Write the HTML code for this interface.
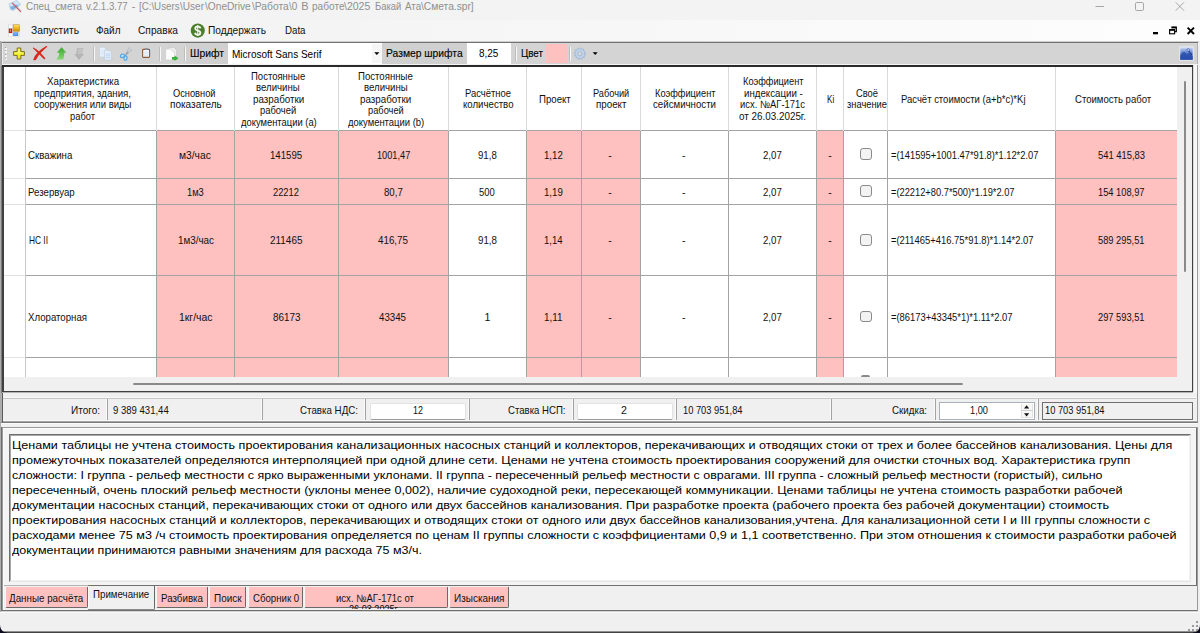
<!DOCTYPE html>
<html><head><meta charset="utf-8"><title>Спец_смета</title>
<style>
html,body{margin:0;padding:0;}
body{width:1200px;height:633px;overflow:hidden;position:relative;background:#f0f0f0;font-family:"Liberation Sans", sans-serif;}
body>div,body>span,body>svg{position:absolute;}
.t{white-space:pre;transform-origin:0 50%;}
</style></head><body>
<div style="left:0px;top:0px;width:1200px;height:20px;background:#f3f3f3;"></div>
<div style="left:0px;top:20px;width:1200px;height:21px;background:linear-gradient(90deg,#f1f1f1,#fdfdfd);"></div>
<div style="left:0px;top:41px;width:1199px;height:1px;background:#cfcfcf;"></div>
<div style="left:1px;top:42px;width:1197px;height:1px;background:#727272;"></div>
<div style="left:2px;top:43px;width:1196px;height:21px;background:#d4d4d4;"></div>
<div style="left:1px;top:42px;width:1px;height:24px;background:#a0a0a0;"></div>
<div style="left:2px;top:43px;width:1px;height:21px;background:#ececec;"></div>
<div style="left:1197px;top:43px;width:1px;height:22px;background:#b0b0b0;"></div>
<div style="left:2px;top:64px;width:1196px;height:1px;background:#f4f4f4;"></div>
<div style="left:228px;top:43px;width:154px;height:21px;background:#ffffff;"></div>
<div style="left:372px;top:44px;width:10px;height:19px;background:#f6f6f6;"></div>
<div style="left:467px;top:43px;width:44px;height:21px;background:#ffffff;"></div>
<div style="left:546px;top:44px;width:21px;height:19px;background:#ffc0c0;"></div>
<div style="left:186px;top:43px;width:42px;height:21px;background:#d0d0d0;"></div>
<div style="left:382px;top:43px;width:85px;height:21px;background:#d0d0d0;"></div>
<div style="left:94px;top:47px;width:1px;height:14px;background:#f8f8f8;"></div>
<div style="left:93px;top:47px;width:1px;height:14px;background:#bdbdbd;"></div>
<div style="left:160px;top:47px;width:1px;height:14px;background:#f8f8f8;"></div>
<div style="left:159px;top:47px;width:1px;height:14px;background:#bdbdbd;"></div>
<div style="left:185px;top:47px;width:1px;height:14px;background:#f8f8f8;"></div>
<div style="left:184px;top:47px;width:1px;height:14px;background:#bdbdbd;"></div>
<div style="left:516px;top:47px;width:1px;height:14px;background:#f8f8f8;"></div>
<div style="left:515px;top:47px;width:1px;height:14px;background:#bdbdbd;"></div>
<div style="left:570px;top:47px;width:1px;height:14px;background:#f8f8f8;"></div>
<div style="left:569px;top:47px;width:1px;height:14px;background:#bdbdbd;"></div>
<div style="left:2px;top:65px;width:1192px;height:327px;background:#404040;"></div>
<div style="left:2px;top:392px;width:1192px;height:1px;background:#b4b4b4;"></div>
<div style="left:2px;top:65px;width:1191px;height:2px;background:#2a2a2a;"></div>
<div style="left:1px;top:66px;width:1px;height:327px;background:#7a7a7a;"></div>
<div style="left:4px;top:67px;width:1188px;height:324px;background:#ffffff;"></div>
<div style="left:1193px;top:65px;width:4px;height:328px;background:#f7f7f7;"></div>
<div style="left:1193px;top:65px;width:1px;height:327px;background:#d8d8d8;"></div>
<div style="left:1197px;top:65px;width:1px;height:328px;background:#9c9c9c;"></div>
<div style="left:4px;top:377px;width:1188px;height:14px;background:#f0f0f0;"></div>
<div style="left:1177px;top:67px;width:15px;height:324px;background:#f0f0f0;"></div>
<div style="left:1184px;top:81px;width:2px;height:191px;background:#8a8a8a;border-radius:1px;"></div>
<div style="left:133px;top:383px;width:830px;height:2px;background:#8a8a8a;border-radius:1px;"></div>
<div style="left:157px;top:131px;width:77px;height:246px;background:#ffc0c0;"></div>
<div style="left:235px;top:131px;width:103px;height:246px;background:#ffc0c0;"></div>
<div style="left:339px;top:131px;width:109px;height:246px;background:#ffc0c0;"></div>
<div style="left:527px;top:131px;width:54px;height:246px;background:#ffc0c0;"></div>
<div style="left:582px;top:131px;width:58px;height:246px;background:#ffc0c0;"></div>
<div style="left:817px;top:131px;width:26px;height:246px;background:#ffc0c0;"></div>
<div style="left:1056px;top:131px;width:121px;height:246px;background:#ffc0c0;"></div>
<div style="left:4px;top:130px;width:21px;height:1px;background:#e2e2e2;"></div>
<div style="left:25px;top:130px;width:1152px;height:1px;background:#a3a3a3;"></div>
<div style="left:4px;top:178px;width:21px;height:1px;background:#e2e2e2;"></div>
<div style="left:25px;top:178px;width:1152px;height:1px;background:#a3a3a3;"></div>
<div style="left:4px;top:204px;width:21px;height:1px;background:#e2e2e2;"></div>
<div style="left:25px;top:204px;width:1152px;height:1px;background:#a3a3a3;"></div>
<div style="left:4px;top:275px;width:21px;height:1px;background:#e2e2e2;"></div>
<div style="left:25px;top:275px;width:1152px;height:1px;background:#a3a3a3;"></div>
<div style="left:4px;top:357px;width:21px;height:1px;background:#e2e2e2;"></div>
<div style="left:25px;top:357px;width:1152px;height:1px;background:#a3a3a3;"></div>
<div style="left:25px;top:67px;width:1px;height:64px;background:#dadada;"></div>
<div style="left:25px;top:131px;width:1px;height:246px;background:#a3a3a3;"></div>
<div style="left:156px;top:67px;width:1px;height:64px;background:#dadada;"></div>
<div style="left:156px;top:131px;width:1px;height:246px;background:#a3a3a3;"></div>
<div style="left:234px;top:67px;width:1px;height:64px;background:#dadada;"></div>
<div style="left:234px;top:131px;width:1px;height:246px;background:#a3a3a3;"></div>
<div style="left:338px;top:67px;width:1px;height:64px;background:#dadada;"></div>
<div style="left:338px;top:131px;width:1px;height:246px;background:#a3a3a3;"></div>
<div style="left:448px;top:67px;width:1px;height:64px;background:#dadada;"></div>
<div style="left:448px;top:131px;width:1px;height:246px;background:#a3a3a3;"></div>
<div style="left:526px;top:67px;width:1px;height:64px;background:#dadada;"></div>
<div style="left:526px;top:131px;width:1px;height:246px;background:#a3a3a3;"></div>
<div style="left:581px;top:67px;width:1px;height:64px;background:#dadada;"></div>
<div style="left:581px;top:131px;width:1px;height:246px;background:#a3a3a3;"></div>
<div style="left:640px;top:67px;width:1px;height:64px;background:#dadada;"></div>
<div style="left:640px;top:131px;width:1px;height:246px;background:#a3a3a3;"></div>
<div style="left:728px;top:67px;width:1px;height:64px;background:#dadada;"></div>
<div style="left:728px;top:131px;width:1px;height:246px;background:#a3a3a3;"></div>
<div style="left:816px;top:67px;width:1px;height:64px;background:#dadada;"></div>
<div style="left:816px;top:131px;width:1px;height:246px;background:#a3a3a3;"></div>
<div style="left:843px;top:67px;width:1px;height:64px;background:#dadada;"></div>
<div style="left:843px;top:131px;width:1px;height:246px;background:#a3a3a3;"></div>
<div style="left:887px;top:67px;width:1px;height:64px;background:#dadada;"></div>
<div style="left:887px;top:131px;width:1px;height:246px;background:#a3a3a3;"></div>
<div style="left:1055px;top:67px;width:1px;height:64px;background:#dadada;"></div>
<div style="left:1055px;top:131px;width:1px;height:246px;background:#a3a3a3;"></div>
<div style="left:25px;top:67px;width:1px;height:310px;background:#c8c8c8;"></div>
<div style="left:860px;top:148px;width:9.7px;height:9.8px;background:#f3f3f3;border:1px solid #8a8a8a;border-radius:3px;"></div>
<div style="left:860px;top:185px;width:9.7px;height:9.8px;background:#f3f3f3;border:1px solid #8a8a8a;border-radius:3px;"></div>
<div style="left:860px;top:234px;width:9.7px;height:9.8px;background:#f3f3f3;border:1px solid #8a8a8a;border-radius:3px;"></div>
<div style="left:860px;top:310.5px;width:9.7px;height:9.8px;background:#f3f3f3;border:1px solid #8a8a8a;border-radius:3px;"></div>
<div style="left:861px;top:375.3px;width:9px;height:1.7px;background:#8a8a8a;border-radius:2px 2px 0 0;"></div>
<div style="left:3px;top:397px;width:1193px;height:1px;background:#f8f8f8;"></div>
<div style="left:3px;top:398px;width:1193px;height:1px;background:#c6c6c6;"></div>
<div style="left:0px;top:421px;width:1198px;height:1px;background:#a4a4a4;"></div>
<div style="left:0px;top:422px;width:1198px;height:1px;background:#7c7c7c;"></div>
<div style="left:0px;top:423px;width:1198px;height:1px;background:#fafafa;"></div>
<div style="left:2px;top:393px;width:1px;height:29px;background:#5a5a5a;"></div>
<div style="left:1px;top:393px;width:1px;height:29px;background:#b0b0b0;"></div>
<div style="left:1197px;top:393px;width:1px;height:29px;background:#9a9a9a;"></div>
<div style="left:105.8px;top:399px;width:1.2px;height:22px;background:#fbfbfb;"></div>
<div style="left:107px;top:399px;width:1px;height:22px;background:#a2a2a2;"></div>
<div style="left:260.8px;top:399px;width:1.2px;height:22px;background:#fbfbfb;"></div>
<div style="left:262px;top:399px;width:1px;height:22px;background:#a2a2a2;"></div>
<div style="left:364.2px;top:399px;width:1.2px;height:22px;background:#fbfbfb;"></div>
<div style="left:365.4px;top:399px;width:1px;height:22px;background:#a2a2a2;"></div>
<div style="left:468.2px;top:399px;width:1.2px;height:22px;background:#fbfbfb;"></div>
<div style="left:469.4px;top:399px;width:1px;height:22px;background:#a2a2a2;"></div>
<div style="left:571.8px;top:399px;width:1.2px;height:22px;background:#fbfbfb;"></div>
<div style="left:573px;top:399px;width:1px;height:22px;background:#a2a2a2;"></div>
<div style="left:674.8px;top:399px;width:1.2px;height:22px;background:#fbfbfb;"></div>
<div style="left:676px;top:399px;width:1px;height:22px;background:#a2a2a2;"></div>
<div style="left:829.8px;top:399px;width:1.2px;height:22px;background:#fbfbfb;"></div>
<div style="left:831px;top:399px;width:1px;height:22px;background:#a2a2a2;"></div>
<div style="left:933.8px;top:399px;width:1.2px;height:22px;background:#fbfbfb;"></div>
<div style="left:935px;top:399px;width:1px;height:22px;background:#a2a2a2;"></div>
<div style="left:1036.8px;top:399px;width:1.2px;height:22px;background:#fbfbfb;"></div>
<div style="left:1038px;top:399px;width:1px;height:22px;background:#a2a2a2;"></div>
<div style="left:3px;top:420px;width:1193px;height:1px;background:#fafafa;"></div>
<div style="left:370px;top:403px;width:94px;height:15px;background:#ffffff;border:1px solid #e2e2e2;border-bottom-color:#9a9a9a;border-radius:2px;"></div>
<div style="left:577px;top:403px;width:94px;height:15px;background:#ffffff;border:1px solid #e2e2e2;border-bottom-color:#9a9a9a;border-radius:2px;"></div>
<div style="left:939px;top:402px;width:94px;height:16px;background:#ffffff;border:1px solid #a9b0bc;"></div>
<div style="left:1021px;top:404px;width:12px;height:14px;background:#f7f7f7;"></div>
<div style="left:1021px;top:404px;width:1px;height:14px;background:#e3e3e3;"></div>
<div style="left:1032px;top:404px;width:1px;height:14px;background:#e3e3e3;"></div>
<div style="left:1021px;top:410px;width:12px;height:1px;background:#d0d0d0;"></div>
<div style="left:1021px;top:417px;width:12px;height:1px;background:#e3e3e3;"></div>
<svg style="left:1024px;top:405px" width="6" height="4" viewBox="0 0 6 4"><path d="M0 3.4 L2.6 0.2 L5.2 3.4Z" fill="#111"/></svg>
<svg style="left:1024px;top:412.6px" width="6" height="4" viewBox="0 0 6 4"><path d="M0 0.2 L2.6 3.4 L5.2 0.2Z" fill="#111"/></svg>
<div style="left:1042px;top:402px;width:149px;height:16px;background:#f0f0f0;border:1px solid #6e6e6e;"></div>
<div style="left:2px;top:427px;width:1195px;height:1px;background:#9a9a9a;"></div>
<div style="left:3px;top:428px;width:1193px;height:1px;background:#fbfbfb;"></div>
<div style="left:2px;top:427px;width:1px;height:184px;background:#9a9a9a;"></div>
<div style="left:3px;top:428px;width:1px;height:182px;background:#fbfbfb;"></div>
<div style="left:1px;top:427px;width:1px;height:184px;background:#6e6e6e;"></div>
<div style="left:4px;top:429px;width:1192px;height:156px;background:#f4f4f4;"></div>
<div style="left:9px;top:434px;width:1182px;height:148px;background:#ffffff;border:1px solid #6e6e6e;border-right-color:#e6e6e6;border-bottom-color:#e6e6e6;box-sizing:border-box;"></div>
<div style="left:10px;top:435px;width:1180px;height:146px;border:1px solid #a8a8a8;border-right-color:#f2f2f2;border-bottom-color:#f2f2f2;box-sizing:border-box;"></div>
<div style="left:1196px;top:428px;width:1px;height:158px;background:#6e6e6e;"></div>
<div style="left:88px;top:585px;width:1109px;height:1px;background:#707070;"></div>
<div style="left:4px;top:585px;width:84px;height:1px;background:#b4b4b4;"></div>
<div style="left:5px;top:586.5px;width:83px;height:21.5px;background:#ffc0c0;border-right:1.3px solid #696969;border-bottom:1.3px solid #696969;border-left:1px solid #f6f6f6;box-sizing:border-box;border-radius:0 0 2px 2px;"></div>
<div style="left:156px;top:586.5px;width:52px;height:21.5px;background:#ffc0c0;border-right:1.3px solid #696969;border-bottom:1.3px solid #696969;border-left:1px solid #f6f6f6;box-sizing:border-box;border-radius:0 0 2px 2px;"></div>
<div style="left:209px;top:586.5px;width:37px;height:21.5px;background:#ffc0c0;border-right:1.3px solid #696969;border-bottom:1.3px solid #696969;border-left:1px solid #f6f6f6;box-sizing:border-box;border-radius:0 0 2px 2px;"></div>
<div style="left:248px;top:586.5px;width:55px;height:21.5px;background:#ffc0c0;border-right:1.3px solid #696969;border-bottom:1.3px solid #696969;border-left:1px solid #f6f6f6;box-sizing:border-box;border-radius:0 0 2px 2px;"></div>
<div style="left:304px;top:586.5px;width:144px;height:21.5px;background:#ffc0c0;border-right:1.3px solid #696969;border-bottom:1.3px solid #696969;border-left:1px solid #f6f6f6;box-sizing:border-box;border-radius:0 0 2px 2px;"></div>
<div style="left:449px;top:586.5px;width:60px;height:21.5px;background:#ffc0c0;border-right:1.3px solid #696969;border-bottom:1.3px solid #696969;border-left:1px solid #f6f6f6;box-sizing:border-box;border-radius:0 0 2px 2px;"></div>
<div style="left:88px;top:585px;width:67px;height:25px;background:#f0f0f0;border-right:1px solid #696969;border-bottom:1px solid #696969;border-left:1px solid #fbfbfb;box-sizing:border-box;border-radius:0 0 2px 2px;"></div>
<div style="left:88px;top:585px;width:1109px;height:1px;background:#707070;"></div>
<div style="left:88px;top:609px;width:66px;height:1px;background:#8a8a8a;"></div>
<div style="left:1px;top:610px;width:1197px;height:1px;background:#707070;"></div>
<div style="left:1px;top:611px;width:1197px;height:1px;background:#d4d4d4;"></div>
<div style="left:0px;top:612px;width:1200px;height:1px;background:#fafafa;"></div>
<div style="left:1197px;top:427px;width:1px;height:184px;background:#9a9a9a;"></div>
<div style="left:0px;top:613px;width:1200px;height:20px;background:#f0f0f0;"></div>
<div style="left:0px;top:41px;width:1px;height:571px;background:#ababab;"></div>
<div style="left:0px;top:632px;width:1200px;height:1px;background:#424242;"></div>
<div style="left:0px;top:631px;width:1200px;height:1px;background:#8e8e8e;"></div>
<svg style="left:0;top:624px" width="8" height="9" viewBox="0 0 8 9"><path d="M0 1 C0.4 5.5 2.5 8.2 7 8.6 L7 9 L0 9 Z" fill="#0c0c1e"/></svg>
<svg style="left:1192px;top:624px" width="8" height="9" viewBox="0 0 8 9"><path d="M8 1 C7.6 5.5 5.5 8.2 1 8.6 L1 9 L8 9 Z" fill="#0c0c1e"/></svg>
<div style="left:1196px;top:621px;width:2px;height:2px;background:#9a9a9a;"></div>
<div style="left:1192px;top:625px;width:2px;height:2px;background:#9a9a9a;"></div>
<div style="left:1196px;top:625px;width:2px;height:2px;background:#9a9a9a;"></div>
<div style="left:1188px;top:629px;width:2px;height:2px;background:#9a9a9a;"></div>
<div style="left:1192px;top:629px;width:2px;height:2px;background:#9a9a9a;"></div>
<div style="left:1196px;top:629px;width:2px;height:2px;background:#9a9a9a;"></div>
<span class="t" style="left:26.00px;top:0.89px;font-size:11px;line-height:11px;color:#8f8f8f;transform:scaleX(0.8989);">Спец_смета</span>
<span class="t" style="left:85.60px;top:0.89px;font-size:11px;line-height:11px;color:#8f8f8f;transform:scaleX(0.8779);">v.2.1.3.77</span>
<span class="t" style="left:139.00px;top:0.89px;font-size:11px;line-height:11px;color:#8f8f8f;transform:scaleX(0.8834);">[C:\Users</span>
<span class="t" style="left:180.20px;top:0.89px;font-size:11px;line-height:11px;color:#8f8f8f;transform:scaleX(0.9151);">\User</span>
<span class="t" style="left:205.00px;top:0.89px;font-size:11px;line-height:11px;color:#8f8f8f;transform:scaleX(0.9237);">\OneDrive</span>
<span class="t" style="left:251.50px;top:0.89px;font-size:11px;line-height:11px;color:#8f8f8f;transform:scaleX(0.9337);">\Работа</span>
<span class="t" style="left:289.00px;top:0.89px;font-size:11px;line-height:11px;color:#8f8f8f;transform:scaleX(0.8980);">\0</span>
<span class="t" style="left:311.60px;top:0.89px;font-size:11px;line-height:11px;color:#8f8f8f;transform:scaleX(0.9167);">работе</span>
<span class="t" style="left:344.40px;top:0.89px;font-size:11px;line-height:11px;color:#8f8f8f;transform:scaleX(0.9553);">\2025</span>
<span class="t" style="left:374.60px;top:0.89px;font-size:11px;line-height:11px;color:#8f8f8f;transform:scaleX(0.8546);">Бакай</span>
<span class="t" style="left:404.70px;top:0.89px;font-size:11px;line-height:11px;color:#8f8f8f;transform:scaleX(0.8930);">Ата</span>
<span class="t" style="left:421.30px;top:0.89px;font-size:11px;line-height:11px;color:#8f8f8f;transform:scaleX(0.9286);">\Смета.spr]</span>
<span class="t" style="left:131.66px;top:0.89px;font-size:11px;line-height:11px;color:#8f8f8f;">-</span>
<span class="t" style="left:301.23px;top:0.89px;font-size:11px;line-height:11px;color:#8f8f8f;">В</span>
<span class="t" style="left:30.70px;top:25.29px;font-size:11px;line-height:11px;color:#111;transform:scaleX(0.9312);">Запустить</span>
<span class="t" style="left:96.00px;top:25.29px;font-size:11px;line-height:11px;color:#111;transform:scaleX(0.9058);">Файл</span>
<span class="t" style="left:138.00px;top:25.29px;font-size:11px;line-height:11px;color:#111;transform:scaleX(0.9269);">Справка</span>
<span class="t" style="left:208.00px;top:25.29px;font-size:11px;line-height:11px;color:#111;transform:scaleX(0.9227);">Поддержать</span>
<span class="t" style="left:284.80px;top:25.29px;font-size:11px;line-height:11px;color:#111;transform:scaleX(0.8817);">Data</span>
<span class="t" style="left:190.00px;top:47.69px;font-size:11px;line-height:11px;color:#000;transform:scaleX(0.9391);-webkit-text-stroke:0.12px #000;">Шрифт</span>
<span class="t" style="left:232.00px;top:48.59px;font-size:11px;line-height:11px;color:#000;transform:scaleX(0.9094);">Microsoft Sans Serif</span>
<span class="t" style="left:386.00px;top:47.69px;font-size:11px;line-height:11px;color:#000;transform:scaleX(0.9377);-webkit-text-stroke:0.12px #000;">Размер шрифта</span>
<span class="t" style="left:479.30px;top:47.69px;font-size:11px;line-height:11px;color:#000;transform:scaleX(0.9056);">8,25</span>
<span class="t" style="left:520.70px;top:47.69px;font-size:11px;line-height:11px;color:#000;transform:scaleX(0.8923);-webkit-text-stroke:0.12px #000;">Цвет</span>
<span class="t" style="left:47.00px;top:76.30px;font-size:10.6px;line-height:10.6px;color:#111;transform:scaleX(0.9173);">Характеристика</span>
<span class="t" style="left:34.25px;top:87.85px;font-size:10.6px;line-height:10.6px;color:#111;transform:scaleX(0.9125);">предприятия, здания,</span>
<span class="t" style="left:33.75px;top:99.40px;font-size:10.6px;line-height:10.6px;color:#111;transform:scaleX(0.9017);">сооружения или виды</span>
<span class="t" style="left:70.00px;top:110.95px;font-size:10.6px;line-height:10.6px;color:#111;transform:scaleX(0.8811);">работ</span>
<span class="t" style="left:173.00px;top:87.85px;font-size:10.6px;line-height:10.6px;color:#111;transform:scaleX(0.8749);">Основной</span>
<span class="t" style="left:169.50px;top:99.40px;font-size:10.6px;line-height:10.6px;color:#111;transform:scaleX(0.9449);">показатель</span>
<span class="t" style="left:251.25px;top:70.53px;font-size:10.6px;line-height:10.6px;color:#111;transform:scaleX(0.8986);">Постоянные</span>
<span class="t" style="left:256.25px;top:82.08px;font-size:10.6px;line-height:10.6px;color:#111;transform:scaleX(0.9103);">величины</span>
<span class="t" style="left:252.50px;top:93.63px;font-size:10.6px;line-height:10.6px;color:#111;transform:scaleX(0.9245);">разработки</span>
<span class="t" style="left:260.00px;top:105.18px;font-size:10.6px;line-height:10.6px;color:#111;transform:scaleX(0.8875);">рабочей</span>
<span class="t" style="left:240.50px;top:116.73px;font-size:10.6px;line-height:10.6px;color:#111;transform:scaleX(0.8865);">документации (a)</span>
<span class="t" style="left:358.25px;top:70.53px;font-size:10.6px;line-height:10.6px;color:#111;transform:scaleX(0.9068);">Постоянные</span>
<span class="t" style="left:363.75px;top:82.08px;font-size:10.6px;line-height:10.6px;color:#111;transform:scaleX(0.9103);">величины</span>
<span class="t" style="left:360.00px;top:93.63px;font-size:10.6px;line-height:10.6px;color:#111;transform:scaleX(0.9245);">разработки</span>
<span class="t" style="left:367.50px;top:105.18px;font-size:10.6px;line-height:10.6px;color:#111;transform:scaleX(0.8753);">рабочей</span>
<span class="t" style="left:347.50px;top:116.73px;font-size:10.6px;line-height:10.6px;color:#111;transform:scaleX(0.8923);">документации (b)</span>
<span class="t" style="left:464.50px;top:87.85px;font-size:10.6px;line-height:10.6px;color:#111;transform:scaleX(0.8900);">Расчётное</span>
<span class="t" style="left:462.50px;top:99.40px;font-size:10.6px;line-height:10.6px;color:#111;transform:scaleX(0.9102);">количество</span>
<span class="t" style="left:538.75px;top:93.63px;font-size:10.6px;line-height:10.6px;color:#111;transform:scaleX(0.9096);">Проект</span>
<span class="t" style="left:593.00px;top:87.85px;font-size:10.6px;line-height:10.6px;color:#111;transform:scaleX(0.8696);">Рабочий</span>
<span class="t" style="left:596.25px;top:99.40px;font-size:10.6px;line-height:10.6px;color:#111;transform:scaleX(0.9234);">проект</span>
<span class="t" style="left:654.50px;top:87.85px;font-size:10.6px;line-height:10.6px;color:#111;transform:scaleX(0.8717);">Коэффициент</span>
<span class="t" style="left:653.25px;top:99.40px;font-size:10.6px;line-height:10.6px;color:#111;transform:scaleX(0.9139);">сейсмичности</span>
<span class="t" style="left:742.50px;top:76.30px;font-size:10.6px;line-height:10.6px;color:#111;transform:scaleX(0.8717);">Коэффициент</span>
<span class="t" style="left:743.75px;top:87.85px;font-size:10.6px;line-height:10.6px;color:#111;transform:scaleX(0.9155);">индексации -</span>
<span class="t" style="left:740.00px;top:99.40px;font-size:10.6px;line-height:10.6px;color:#111;transform:scaleX(0.8895);">исх. №АГ-171с</span>
<span class="t" style="left:739.25px;top:110.95px;font-size:10.6px;line-height:10.6px;color:#111;transform:scaleX(0.9306);">от 26.03.2025г.</span>
<span class="t" style="left:827.00px;top:93.63px;font-size:10.6px;line-height:10.6px;color:#111;transform:scaleX(0.7695);">Ki</span>
<span class="t" style="left:855.50px;top:87.85px;font-size:10.6px;line-height:10.6px;color:#111;transform:scaleX(0.8817);">Своё</span>
<span class="t" style="left:846.70px;top:99.40px;font-size:10.6px;line-height:10.6px;color:#111;transform:scaleX(0.8803);">значение</span>
<span class="t" style="left:901.25px;top:93.63px;font-size:10.6px;line-height:10.6px;color:#111;transform:scaleX(0.8956);">Расчёт стоимости (a+b*c)*Kj</span>
<span class="t" style="left:1075.00px;top:93.63px;font-size:10.6px;line-height:10.6px;color:#111;transform:scaleX(0.9040);">Стоимость работ</span>
<span class="t" style="left:27.70px;top:150.03px;font-size:10.6px;line-height:10.6px;color:#111;transform:scaleX(0.9146);">Скважина</span>
<span class="t" style="left:178.75px;top:150.03px;font-size:10.6px;line-height:10.6px;color:#111;transform:scaleX(0.9672);">м3/час</span>
<span class="t" style="left:269.50px;top:150.03px;font-size:10.6px;line-height:10.6px;color:#111;transform:scaleX(0.9106);">141595</span>
<span class="t" style="left:376.75px;top:150.03px;font-size:10.6px;line-height:10.6px;color:#111;transform:scaleX(0.8682);">1001,47</span>
<span class="t" style="left:478.00px;top:150.03px;font-size:10.6px;line-height:10.6px;color:#111;transform:scaleX(0.9091);">91,8</span>
<span class="t" style="left:543.75px;top:150.03px;font-size:10.6px;line-height:10.6px;color:#111;transform:scaleX(0.9091);">1,12</span>
<span class="t" style="left:762.50px;top:150.03px;font-size:10.6px;line-height:10.6px;color:#111;transform:scaleX(0.9091);">2,07</span>
<span class="t" style="left:891.00px;top:150.03px;font-size:10.6px;line-height:10.6px;color:#111;transform:scaleX(0.8811);">=(141595+1001.47*91.8)*1.12*2.07</span>
<span class="t" style="left:1097.50px;top:150.03px;font-size:10.6px;line-height:10.6px;color:#111;transform:scaleX(0.8863);">541 415,83</span>
<span class="t" style="left:608.23px;top:150.03px;font-size:10.6px;line-height:10.6px;color:#111;">-</span>
<span class="t" style="left:681.98px;top:150.03px;font-size:10.6px;line-height:10.6px;color:#111;">-</span>
<span class="t" style="left:828.23px;top:150.03px;font-size:10.6px;line-height:10.6px;color:#111;">-</span>
<span class="t" style="left:28.25px;top:186.93px;font-size:10.6px;line-height:10.6px;color:#111;transform:scaleX(0.9141);">Резервуар</span>
<span class="t" style="left:187.00px;top:186.93px;font-size:10.6px;line-height:10.6px;color:#111;transform:scaleX(0.8780);">1м3</span>
<span class="t" style="left:272.60px;top:186.93px;font-size:10.6px;line-height:10.6px;color:#111;transform:scaleX(0.8789);">22212</span>
<span class="t" style="left:383.75px;top:186.93px;font-size:10.6px;line-height:10.6px;color:#111;transform:scaleX(0.9091);">80,7</span>
<span class="t" style="left:478.75px;top:186.93px;font-size:10.6px;line-height:10.6px;color:#111;transform:scaleX(0.8905);">500</span>
<span class="t" style="left:543.75px;top:186.93px;font-size:10.6px;line-height:10.6px;color:#111;transform:scaleX(0.9091);">1,19</span>
<span class="t" style="left:762.50px;top:186.93px;font-size:10.6px;line-height:10.6px;color:#111;transform:scaleX(0.9091);">2,07</span>
<span class="t" style="left:891.00px;top:186.93px;font-size:10.6px;line-height:10.6px;color:#111;transform:scaleX(0.8772);">=(22212+80.7*500)*1.19*2.07</span>
<span class="t" style="left:1098.00px;top:186.93px;font-size:10.6px;line-height:10.6px;color:#111;transform:scaleX(0.8768);">154 108,97</span>
<span class="t" style="left:608.23px;top:186.93px;font-size:10.6px;line-height:10.6px;color:#111;">-</span>
<span class="t" style="left:681.98px;top:186.93px;font-size:10.6px;line-height:10.6px;color:#111;">-</span>
<span class="t" style="left:828.23px;top:186.93px;font-size:10.6px;line-height:10.6px;color:#111;">-</span>
<span class="t" style="left:28.50px;top:235.43px;font-size:10.6px;line-height:10.6px;color:#111;transform:scaleX(0.7871);">НС II</span>
<span class="t" style="left:177.50px;top:235.43px;font-size:10.6px;line-height:10.6px;color:#111;transform:scaleX(0.9298);">1м3/час</span>
<span class="t" style="left:270.00px;top:235.43px;font-size:10.6px;line-height:10.6px;color:#111;transform:scaleX(0.9399);">211465</span>
<span class="t" style="left:377.50px;top:235.43px;font-size:10.6px;line-height:10.6px;color:#111;transform:scaleX(0.9257);">416,75</span>
<span class="t" style="left:477.50px;top:235.43px;font-size:10.6px;line-height:10.6px;color:#111;transform:scaleX(0.9212);">91,8</span>
<span class="t" style="left:544.00px;top:235.43px;font-size:10.6px;line-height:10.6px;color:#111;transform:scaleX(0.8970);">1,14</span>
<span class="t" style="left:762.50px;top:235.43px;font-size:10.6px;line-height:10.6px;color:#111;transform:scaleX(0.9091);">2,07</span>
<span class="t" style="left:891.00px;top:235.43px;font-size:10.6px;line-height:10.6px;color:#111;transform:scaleX(0.8872);">=(211465+416.75*91.8)*1.14*2.07</span>
<span class="t" style="left:1097.50px;top:235.43px;font-size:10.6px;line-height:10.6px;color:#111;transform:scaleX(0.8768);">589 295,51</span>
<span class="t" style="left:608.23px;top:235.43px;font-size:10.6px;line-height:10.6px;color:#111;">-</span>
<span class="t" style="left:681.98px;top:235.43px;font-size:10.6px;line-height:10.6px;color:#111;">-</span>
<span class="t" style="left:828.23px;top:235.43px;font-size:10.6px;line-height:10.6px;color:#111;">-</span>
<span class="t" style="left:27.50px;top:311.63px;font-size:10.6px;line-height:10.6px;color:#111;transform:scaleX(0.9103);">Хлораторная</span>
<span class="t" style="left:179.00px;top:311.63px;font-size:10.6px;line-height:10.6px;color:#111;transform:scaleX(0.9839);">1кг/час</span>
<span class="t" style="left:272.50px;top:311.63px;font-size:10.6px;line-height:10.6px;color:#111;transform:scaleX(0.9332);">86173</span>
<span class="t" style="left:379.00px;top:311.63px;font-size:10.6px;line-height:10.6px;color:#111;transform:scaleX(0.9162);">43345</span>
<span class="t" style="left:544.00px;top:311.63px;font-size:10.6px;line-height:10.6px;color:#111;transform:scaleX(0.9323);">1,11</span>
<span class="t" style="left:762.50px;top:311.63px;font-size:10.6px;line-height:10.6px;color:#111;transform:scaleX(0.9091);">2,07</span>
<span class="t" style="left:891.00px;top:311.63px;font-size:10.6px;line-height:10.6px;color:#111;transform:scaleX(0.8865);">=(86173+43345*1)*1.11*2.07</span>
<span class="t" style="left:1097.50px;top:311.63px;font-size:10.6px;line-height:10.6px;color:#111;transform:scaleX(0.8768);">297 593,51</span>
<span class="t" style="left:608.23px;top:311.63px;font-size:10.6px;line-height:10.6px;color:#111;">-</span>
<span class="t" style="left:681.98px;top:311.63px;font-size:10.6px;line-height:10.6px;color:#111;">-</span>
<span class="t" style="left:828.23px;top:311.63px;font-size:10.6px;line-height:10.6px;color:#111;">-</span>
<span class="t" style="left:484.55px;top:311.63px;font-size:10.6px;line-height:10.6px;color:#111;">1</span>
<span class="t" style="left:71.00px;top:405.33px;font-size:10.6px;line-height:10.6px;color:#111;transform:scaleX(0.9440);">Итого:</span>
<span class="t" style="left:113.00px;top:405.33px;font-size:10.6px;line-height:10.6px;color:#111;transform:scaleX(0.9012);">9 389 431,44</span>
<span class="t" style="left:300.00px;top:405.33px;font-size:10.6px;line-height:10.6px;color:#111;transform:scaleX(0.9202);">Ставка НДС:</span>
<span class="t" style="left:412.50px;top:405.33px;font-size:10.6px;line-height:10.6px;color:#111;transform:scaleX(0.8477);">12</span>
<span class="t" style="left:508.00px;top:405.33px;font-size:10.6px;line-height:10.6px;color:#111;transform:scaleX(0.9060);">Ставка НСП:</span>
<span class="t" style="left:683.00px;top:405.33px;font-size:10.6px;line-height:10.6px;color:#111;transform:scaleX(0.8782);">10 703 951,84</span>
<span class="t" style="left:892.00px;top:405.33px;font-size:10.6px;line-height:10.6px;color:#111;transform:scaleX(0.9188);">Скидка:</span>
<span class="t" style="left:970.00px;top:405.33px;font-size:10.6px;line-height:10.6px;color:#111;transform:scaleX(0.8727);">1,00</span>
<span class="t" style="left:1044.50px;top:405.33px;font-size:10.6px;line-height:10.6px;color:#111;transform:scaleX(0.8782);">10 703 951,84</span>
<span class="t" style="left:621.05px;top:405.33px;font-size:10.6px;line-height:10.6px;color:#111;">2</span>
<span class="t" style="left:12.00px;top:439.61px;font-size:11.8px;line-height:11.8px;color:#000;transform:scaleX(1.0655);">Ценами таблицы не учтена стоимость проектирования канализационных насосных станций и коллекторов, перекачивающих и отводящих стоки от трех и более бассейнов канализования. Цены для</span>
<span class="t" style="left:12.00px;top:454.61px;font-size:11.8px;line-height:11.8px;color:#000;transform:scaleX(1.0727);">промежуточных показателей определяются интерполяцией при одной длине сети. Ценами не учтена стоимость проектирования сооружений для очистки сточных вод. Характеристика групп</span>
<span class="t" style="left:12.00px;top:469.61px;font-size:11.8px;line-height:11.8px;color:#000;transform:scaleX(1.0559);">сложности: I группа - рельеф местности с ярко выраженными уклонами. II группа - пересеченный рельеф местности с оврагами. III группа - сложный рельеф местности (гористый), сильно</span>
<span class="t" style="left:12.00px;top:484.61px;font-size:11.8px;line-height:11.8px;color:#000;transform:scaleX(1.0684);">пересеченный, очень плоский рельеф местности (уклоны менее 0,002), наличие судоходной реки, пересекающей коммуникации. Ценами таблицы не учтена стоимость разработки рабочей</span>
<span class="t" style="left:12.00px;top:499.61px;font-size:11.8px;line-height:11.8px;color:#000;transform:scaleX(1.0705);">документации насосных станций, перекачивающих стоки от одного или двух бассейнов канализования. При разработке проекта (рабочего проекта без рабочей документации) стоимость</span>
<span class="t" style="left:12.00px;top:514.61px;font-size:11.8px;line-height:11.8px;color:#000;transform:scaleX(1.0643);">проектирования насосных станций и коллекторов, перекачивающих и отводящих стоки от одного или двух бассейнов канализования,учтена. Для канализационной сети I и III группы сложности с</span>
<span class="t" style="left:12.00px;top:529.61px;font-size:11.8px;line-height:11.8px;color:#000;transform:scaleX(1.0670);">расходами менее 75 м3 /ч стоимость проектирования определяется по ценам II группы сложности с коэффициентами 0,9 и 1,1 соответственно. При этом отношения к стоимости разработки рабочей</span>
<span class="t" style="left:12.00px;top:544.61px;font-size:11.8px;line-height:11.8px;color:#000;transform:scaleX(1.0603);">документации принимаются равными значениям для расхода 75 м3/ч.</span>
<span class="t" style="left:8.75px;top:593.03px;font-size:10.6px;line-height:10.6px;color:#111;transform:scaleX(0.9256);">Данные расчёта</span>
<span class="t" style="left:160.50px;top:593.03px;font-size:10.6px;line-height:10.6px;color:#111;transform:scaleX(0.9209);">Разбивка</span>
<span class="t" style="left:213.75px;top:593.03px;font-size:10.6px;line-height:10.6px;color:#111;transform:scaleX(0.9367);">Поиск</span>
<span class="t" style="left:252.50px;top:593.03px;font-size:10.6px;line-height:10.6px;color:#111;transform:scaleX(0.9113);">Сборник 0</span>
<span class="t" style="left:453.75px;top:593.03px;font-size:10.6px;line-height:10.6px;color:#111;transform:scaleX(0.9412);">Изыскания</span>
<span class="t" style="left:93.25px;top:589.33px;font-size:10.6px;line-height:10.6px;color:#111;transform:scaleX(0.9172);">Примечание</span>
<span class="t" style="left:336.25px;top:592.53px;font-size:10.6px;line-height:10.6px;color:#111;transform:scaleX(0.9014);">исх. №АГ-171с от</span>
<div style="left:305px;top:603.5px;width:141px;height:5px;overflow:hidden;"><span class="t" style="position:absolute;left:44px;top:0.9px;font-size:10.6px;line-height:10.6px;color:#111;transform:scaleX(0.86);">26.03.2025г.</span></div>
<svg style="left:8px;top:0px" width="14" height="13" viewBox="0 0 14 13">
<path d="M0.6 3.6 L8.5 0 L13.2 4.2 L5.6 11 L2 9.8 Z" fill="#b4d2ec"/>
<path d="M1.2 4 L8 1 L11.5 3.8 L4.5 8 Z" fill="#d6e8f7"/>
<path d="M2 7 L9 4.5 L10 6.5 L4 10 Z" fill="#7fb0de"/>
<path d="M4.2 3.2 L12.6 11.6" stroke="#cf5a62" stroke-width="1.2" fill="none" stroke-linecap="round"/>
<path d="M5.4 3.0 L13 10.8" stroke="#8a8a9a" stroke-width="0.6" fill="none"/>
</svg>
<svg style="left:1095px;top:1px" width="100" height="12" viewBox="0 0 100 12">
<path d="M0.5 5.5 H9" stroke="#a6a6a6" stroke-width="1" fill="none"/>
<rect x="40.5" y="1.5" width="8" height="8" rx="1.2" fill="none" stroke="#a6a6a6" stroke-width="1"/>
<path d="M80.7 1.3 L89 9.7 M89 1.3 L80.7 9.7" stroke="#a6a6a6" stroke-width="1" fill="none"/>
</svg>
<svg style="left:1150px;top:25px" width="48" height="12" viewBox="0 0 48 12">
<rect x="3" y="7" width="5" height="2.3" fill="#000"/>
<path d="M21.5 2.2 H26.3 V6.6 H24.8" stroke="#000" stroke-width="1.2" fill="none"/>
<path d="M21.5 2.6 H26.3" stroke="#000" stroke-width="1.6" fill="none"/>
<rect x="19.6" y="4.6" width="5" height="4.2" fill="#fcfcfc" stroke="#000" stroke-width="1.1"/>
<path d="M19.6 5 H24.6" stroke="#000" stroke-width="1.6" fill="none"/>
<path d="M37.6 2.6 L44 9 M44 2.6 L37.6 9" stroke="#000" stroke-width="1.9" fill="none"/>
</svg>
<svg style="left:8px;top:24px" width="13" height="13" viewBox="0 0 13 13">
<rect x="0" y="0.5" width="12" height="12" fill="#dedede"/>
<rect x="1" y="1.3" width="3" height="2.6" fill="#ffffff"/>
<rect x="1" y="9.7" width="3" height="2.3" fill="#ffffff"/>
<rect x="0.8" y="4.6" width="3.4" height="4.4" fill="#c2200f"/>
<rect x="2.1" y="5.6" width="0.9" height="2" fill="#f4b0a0"/>
<defs><linearGradient id="gy" x1="0" y1="0" x2="0" y2="1"><stop offset="0" stop-color="#fbe27a"/><stop offset="0.5" stop-color="#f2b81c"/><stop offset="1" stop-color="#c88f10"/></linearGradient></defs>
<rect x="5.2" y="0.8" width="6.3" height="6.4" fill="url(#gy)" stroke="#b88a18" stroke-width="0.5"/>
<rect x="5.2" y="8.4" width="4.8" height="3.6" fill="#4b8ee6"/>
<rect x="6.2" y="9.4" width="2.8" height="1" fill="#9cc4f6"/>
</svg>
<svg style="left:190px;top:23px" width="16" height="16" viewBox="0 0 16 16">
<circle cx="7.75" cy="7.6" r="7.05" fill="#4a7d2c"/>
<path d="M10.4 5.4 C10.1 4.0 9.0 3.5 7.75 3.5 C6.3 3.5 5.2 4.3 5.2 5.5 C5.2 6.8 6.4 7.2 7.75 7.6 C9.2 8.0 10.4 8.5 10.4 9.8 C10.4 11.0 9.2 11.8 7.75 11.8 C6.4 11.8 5.3 11.2 5.0 9.8" fill="none" stroke="#f4f7f0" stroke-width="1.8"/>
<path d="M7.75 2.2 V13" stroke="#f4f7f0" stroke-width="1.1" fill="none"/>
</svg>
<div style="left:5px;top:47.5px;width:2px;height:2px;background:#f4f4f4;"></div>
<div style="left:4.5px;top:46.9px;width:1px;height:1px;background:#a8a8a8;"></div>
<div style="left:5px;top:51px;width:2px;height:2px;background:#f4f4f4;"></div>
<div style="left:4.5px;top:50.4px;width:1px;height:1px;background:#a8a8a8;"></div>
<div style="left:5px;top:54.6px;width:2px;height:2px;background:#f4f4f4;"></div>
<div style="left:4.5px;top:54.0px;width:1px;height:1px;background:#a8a8a8;"></div>
<div style="left:5px;top:58.1px;width:2px;height:2px;background:#f4f4f4;"></div>
<div style="left:4.5px;top:57.5px;width:1px;height:1px;background:#a8a8a8;"></div>
<svg style="left:12px;top:47px" width="14" height="13" viewBox="0 0 14 13">
<path d="M5.2 1 H8.8 V4.6 H12.4 V8.4 H8.8 V12 H5.2 V8.4 H1.6 V4.6 H5.2 Z" fill="#f2f024" stroke="#7d6c22" stroke-width="1" stroke-linejoin="round"/>
<path d="M6.2 2 H7.8 V5.6 H11.4 V6.6 H2.6 V5.6 H6.2 Z" fill="#fbfb8c" opacity="0.7"/>
</svg>
<svg style="left:32px;top:46px" width="16" height="15" viewBox="0 0 16 15">
<path d="M1.2 2.0 C4.8 3.4 9.8 8.0 13.0 12.6 C12.4 13.0 12.0 12.8 11.6 12.4 C8.6 9.0 4.6 5.4 1.2 2.0 Z" fill="#d8281c" stroke="#d8281c" stroke-width="0.9" stroke-linejoin="round"/>
<path d="M14.6 0.6 C9.6 3.4 3.6 8.6 1.9 13.6 C2.8 14.0 3.6 13.4 4.1 12.4 C6.0 8.4 10.6 4.0 14.6 0.6 Z" fill="#d8281c" stroke="#d8281c" stroke-width="1.2" stroke-linejoin="round"/>
</svg>
<svg style="left:55px;top:47px" width="13" height="14" viewBox="0 0 13 14">
<defs><linearGradient id="gg" x1="0" y1="0" x2="0" y2="1"><stop offset="0" stop-color="#38a82c"/><stop offset="1" stop-color="#86d872"/></linearGradient></defs>
<path d="M6.6 0.3 L11.4 5.8 H9.2 C9.2 8.6 8.8 10.6 8.2 12.4 H1 C3.2 10.6 4.2 8.6 4.2 5.8 H1.6 Z" fill="url(#gg)"/>
</svg>
<svg style="left:73px;top:47px" width="12" height="14" viewBox="0 0 12 14">
<path d="M4 1 H10.4 C9.6 3 9.2 5 9.2 7 H11 L6 13 L1.2 7 H3.4 C3.4 5 3.6 3 4 1 Z" fill="#b4b4b4"/>
<path d="M4.6 1.6 H9.6 C9 3.4 8.6 5 8.6 7 H5 C5 5 5 3.4 4.6 1.6Z" fill="#c4c4c4"/>
</svg>
<svg style="left:98px;top:46px" width="15" height="15" viewBox="0 0 15 15">
<path d="M1.5 1.2 H6 L8.3 3.5 V11 H1.5 Z" fill="#e8f1fb" stroke="#c3cfdd" stroke-width="0.7"/>
<path d="M6.4 4.2 H11 L13.6 6.8 V14 H6.4 Z" fill="#e4eefa" stroke="#bccadb" stroke-width="0.7"/>
<path d="M7.6 8 H12.4 M7.6 9.8 H12.4 M7.6 11.6 H12.4" stroke="#b5cdee" stroke-width="0.8"/>
<path d="M2.6 4.6 H5.6 M2.6 6.4 H5.6 M2.6 8.2 H5.6" stroke="#cfdff3" stroke-width="0.8"/>
</svg>
<svg style="left:119px;top:47px" width="14" height="14" viewBox="0 0 14 14">
<path d="M10.2 1 L6.4 8.6 M12.2 3 L5.8 9" stroke="#9aa4b2" stroke-width="1.1" fill="none" stroke-linecap="round"/>
<path d="M10.4 1.2 L8.6 4.6 M12 3.2 L9.4 5.6" stroke="#eef1f5" stroke-width="0.6" fill="none"/>
<ellipse cx="3.4" cy="8.8" rx="2.2" ry="1.6" transform="rotate(-25 3.4 8.8)" fill="#bcdcf4" stroke="#4ea6e6" stroke-width="1.1"/>
<ellipse cx="6.5" cy="11.1" rx="1.5" ry="2.2" transform="rotate(15 6.5 11.1)" fill="#bcdcf4" stroke="#4ea6e6" stroke-width="1.1"/>
</svg>
<svg style="left:141px;top:47px" width="11" height="12" viewBox="0 0 11 12">
<rect x="1.6" y="2.4" width="7" height="8" rx="0.8" fill="#f0f5fb" stroke="#8b5a3c" stroke-width="1.1"/>
<rect x="3.7" y="1.1" width="2.8" height="1.9" fill="#8a8f98"/>
<path d="M3.2 5.2 H7 M3.2 6.8 H7 M3.2 8.4 H7" stroke="#d4e2f2" stroke-width="0.7"/>
</svg>
<svg style="left:164px;top:46px" width="16" height="16" viewBox="0 0 16 16">
<path d="M4.4 1.4 H9.6 L12.6 4.4 V12.6 H4.4 Z" fill="#f4f4f4" stroke="#c4c4c4" stroke-width="0.7"/>
<path d="M1.6 3.0 H8 L10.8 5.8 V14 H1.6 Z" fill="#fcfcfc" stroke="#cccccc" stroke-width="0.7"/>
<path d="M8 3.0 V5.8 H10.8" fill="none" stroke="#d8d8d8" stroke-width="0.6"/>
<path d="M8 10.9 H10.6 V9.5 L14.4 12.3 L10.6 15.1 V13.7 H8 Z" fill="#34b234"/>
</svg>
<svg style="left:573px;top:46px" width="14" height="15" viewBox="0 0 14 15">
<path d="M11.90 7.70 L12.88 8.17 L12.70 9.25 L11.61 9.37 L11.23 10.20 L11.84 11.10 L11.14 11.94 L10.15 11.50 L9.40 12.03 L9.48 13.12 L8.45 13.50 L7.81 12.62 L6.90 12.70 L6.43 13.68 L5.35 13.50 L5.23 12.41 L4.40 12.03 L3.50 12.64 L2.66 11.94 L3.10 10.95 L2.57 10.20 L1.48 10.28 L1.10 9.25 L1.98 8.61 L1.90 7.70 L0.92 7.23 L1.10 6.15 L2.19 6.03 L2.57 5.20 L1.96 4.30 L2.66 3.46 L3.65 3.90 L4.40 3.37 L4.32 2.28 L5.35 1.90 L5.99 2.78 L6.90 2.70 L7.37 1.72 L8.45 1.90 L8.57 2.99 L9.40 3.37 L10.30 2.76 L11.14 3.46 L10.70 4.45 L11.23 5.20 L12.32 5.12 L12.70 6.15 L11.82 6.79 Z" fill="#aec4de" stroke="#a3bad6" stroke-width="0.4"/>
<circle cx="6.9" cy="7.7" r="3.6" fill="none" stroke="#c3d3e8" stroke-width="1.6"/>
<circle cx="6.9" cy="7.7" r="4.9" fill="none" stroke="#8fa9c9" stroke-width="0.5" stroke-dasharray="1 1.6"/>
<circle cx="6.9" cy="7.7" r="1.9" fill="#d9d9d9" stroke="#9fb4d0" stroke-width="0.5"/>
</svg>
<svg style="left:592px;top:52px" width="6" height="4" viewBox="0 0 6 4"><path d="M0.7 0.3 H5.7 L3.2 3.1 Z" fill="#000"/></svg>
<svg style="left:374px;top:52px" width="6" height="4" viewBox="0 0 6 4"><path d="M0.2 0.2 H5.4 L2.8 3 Z" fill="#000"/></svg>
<svg style="left:1179px;top:46px" width="15" height="15" viewBox="0 0 15 15">
<defs><linearGradient id="gb" x1="0" y1="0" x2="0" y2="1"><stop offset="0" stop-color="#cfdcf4"/><stop offset="0.45" stop-color="#5d83cf"/><stop offset="1" stop-color="#1d3f9a"/></linearGradient></defs>
<rect x="0.5" y="0.5" width="14" height="14" fill="#eef2fa"/>
<rect x="1.3" y="1.3" width="12.4" height="12.4" fill="url(#gb)"/>
<path d="M1.3 9 L5 5.4 L8 8.2 L10 6.6 L13.7 10.4 V13.7 H1.3 Z" fill="#2a4fae" opacity="0.85"/>
<circle cx="9.2" cy="4" r="1.3" fill="#e4ecfb" stroke="#2a49a8" stroke-width="0.7"/>
<path d="M9.8 5 L13 9" stroke="#18286a" stroke-width="1"/>
</svg>
</body></html>
